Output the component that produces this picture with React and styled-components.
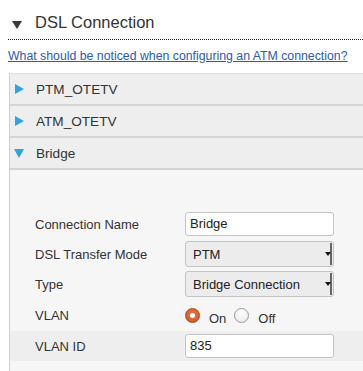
import styled, { createGlobalStyle } from 'styled-components'

const Global = createGlobalStyle`
  html, body {
    margin: 0;
    padding: 0;
    background: #fff;
    font-family: "Liberation Sans", Arial, sans-serif;
    color: #333;
  }
`

const Page = styled.div`
  width: 363px;
  height: 371px;
  overflow: hidden;
  padding-left: 8px;
  box-sizing: border-box;
`

const Title = styled.div`
  display: flex;
  align-items: center;
  height: 40px;
  padding: 5px 0 0 4px;
  box-sizing: border-box;
  gap: 13px;
  border-bottom: 1px dotted #222;
  font-size: 16.5px;
  color: #333;
`

const DarkArrow = styled.span`
  width: 0;
  height: 0;
  margin-top: 6px;
  border-left: 5px solid transparent;
  border-right: 5px solid transparent;
  border-top: 8px solid #3a3a3a;
`

const HelpLink = styled.a`
  display: block;
  margin-top: 9px;
  font-size: 12.3px;
  color: #2b5cae;
  text-decoration: underline;
  white-space: nowrap;
`

const Accordion = styled.div`
  margin-top: 10px;
  margin-left: 1px;
  border-left: 1px solid #cfcfcf;
  border-top: 1px solid #dcdcdc;
  width: 420px;
`

const Header = styled.div`
  display: flex;
  align-items: center;
  gap: 12px;
  height: 30px;
  padding-left: 4px;
  background: #eeeeee;
  border-bottom: 2px solid #d4d4d4;
  font-size: 13.6px;
  color: #333;
`

const BlueArrow = styled.span`
  width: 0;
  height: 0;
  ${({ open }) =>
    open
      ? `
    margin-left: 0;
    border-left: 5px solid transparent;
    border-right: 5px solid transparent;
    border-top: 9px solid #2aa6e0;
  `
      : `
    margin-left: 1px;
    border-top: 5px solid transparent;
    border-bottom: 5px solid transparent;
    border-left: 9px solid #2aa6e0;
  `}
`

const Content = styled.div`
  background: #f6f6f6;
  padding-top: 39px;
  padding-bottom: 20px;
`

const Row = styled.div`
  display: flex;
  align-items: center;
  height: ${({ tall }) => (tall ? 32 : 30)}px;
  padding-left: 25px;
  background: ${({ shaded }) => (shaded ? '#eeeeee' : 'transparent')};
  font-size: 13px;
`

const Label = styled.div`
  width: 150px;
  color: #333;
`

const Input = styled.div`
  width: 143px;
  height: 22px;
  line-height: 22px;
  padding-left: 4px;
  border: 1px solid #c4c4c4;
  border-radius: 3px;
  background: #fff;
  font-size: 13px;
  color: #222;
`

const Select = styled.div`
  display: flex;
  align-items: center;
  width: 147px;
  height: 24px;
  border: 1px solid #c4c4c4;
  border-radius: 3px;
  background: #ececec;
  font-size: 13px;
  color: #222;
`

const SelectText = styled.span`
  flex: 1;
  padding-left: 7px;
`

const SelectArrow = styled.span`
  position: relative;
  width: 5px;
  height: 22px;
  margin-right: 1px;
  border-right: 2px solid #666;
  &::after {
    content: '';
    position: absolute;
    left: 0;
    top: 9px;
    border-left: 3px solid transparent;
    border-right: 3px solid transparent;
    border-top: 4px solid #111;
  }
`

const Radio = styled.span`
  width: 15px;
  height: 15px;
  border-radius: 50%;
  box-sizing: border-box;
  display: inline-flex;
  align-items: center;
  justify-content: center;
  ${({ checked }) =>
    checked
      ? `
    background: radial-gradient(circle at 50% 40%, #e87a4a, #c9521e);
    border: 1px solid #b04416;
    &::after {
      content: '';
      width: 5px;
      height: 5px;
      border-radius: 50%;
      background: #fff;
    }
  `
      : `
    background: radial-gradient(circle at 50% 30%, #fff, #e6e6e6);
    border: 1px solid #9a9a9a;
  `}
`

const RadioGroup = styled.div`
  display: flex;
  align-items: center;
`

const RadioLabel = styled.span`
  margin: 7px 8px 0 9px;
  color: #333;
`

const sections = ['PTM_OTETV', 'ATM_OTETV']

const App = () => {
  return (
    <Page>
      <Global />
      <Title>
        <DarkArrow />
        DSL Connection
      </Title>
      <HelpLink href="#">
        What should be noticed when configuring an ATM connection?
      </HelpLink>
      <Accordion>
        {sections.map((name) => (
          <Header key={name}>
            <BlueArrow />
            {name}
          </Header>
        ))}
        <Header>
          <BlueArrow open />
          Bridge
        </Header>
        <Content>
          <Row>
            <Label>Connection Name</Label>
            <Input>Bridge</Input>
          </Row>
          <Row>
            <Label>DSL Transfer Mode</Label>
            <Select>
              <SelectText>PTM</SelectText>
              <SelectArrow />
            </Select>
          </Row>
          <Row>
            <Label>Type</Label>
            <Select>
              <SelectText>Bridge Connection</SelectText>
              <SelectArrow />
            </Select>
          </Row>
          <Row tall>
            <Label>VLAN</Label>
            <RadioGroup>
              <Radio checked />
              <RadioLabel>On</RadioLabel>
              <Radio />
              <RadioLabel>Off</RadioLabel>
            </RadioGroup>
          </Row>
          <Row shaded>
            <Label>VLAN ID</Label>
            <Input>835</Input>
          </Row>
        </Content>
      </Accordion>
    </Page>
  )
}

export default App
